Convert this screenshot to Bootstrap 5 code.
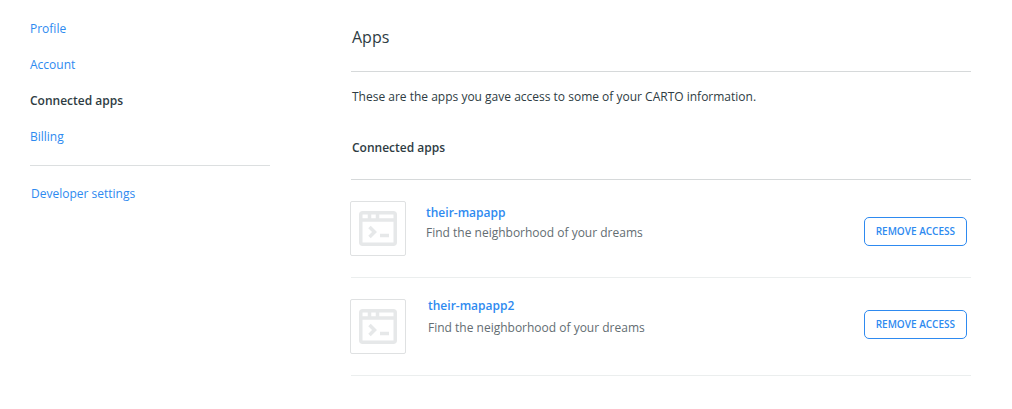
<!DOCTYPE html>
<html lang="en">
<head>
<meta charset="utf-8">
<meta name="viewport" content="width=device-width, initial-scale=1">
<title>Connected apps</title>
<link href="https://cdn.jsdelivr.net/npm/bootstrap@5.3.0/dist/css/bootstrap.min.css" rel="stylesheet">
<style>
  body { font: 400 12px/20px "Open Sans", sans-serif; color: #2e3c43; background: #fff; }
  a { color: #2e8af0; text-decoration: none; }
  a:hover { text-decoration: underline; }
  .page { padding: 19px 41px 0 30px; gap: 81px; }
  .sidebar { flex: 0 0 240px; }
  .side-links { gap: 16px; padding-bottom: 18px; border-bottom: 1px solid #dcdfe0; }
  .side-extra { padding: 18px 1px; }
  .page-title { font-size: 16px; line-height: 24px; padding: 6px 1px 22px; border-bottom: 1px solid #d6d9da; }
  .intro { padding: 15px 1px 31px; }
  .section-title { font-size: 12px; line-height: 20px; padding: 0 1px 21px; border-bottom: 1px solid #d6d9da; }
  .app-item { gap: 20px; min-height: 98px; border-bottom: 1px solid #ebeeee; }
  .app-icon { width: 56px; height: 55px; margin-top: 21px; margin-left: -1px; border: 1px solid #dfe1e2; border-radius: 2px; }
  .app-text { padding-top: 23px; color: #636d72; }
  .app-action { padding: 37px 4px 0 0; }
  .app-compact { gap: 22px; }
  .app-compact .app-text { padding-top: 18px; row-gap: 2px; }
  .app-compact .app-action { padding-top: 32px; }
  .btn-access { --bs-btn-color: #2e8af0; --bs-btn-border-color: #2e8af0; --bs-btn-hover-bg: #2e8af0; --bs-btn-hover-color: #fff;
    --bs-btn-padding-x: 11px; --bs-btn-padding-y: 5px; --bs-btn-border-radius: 5px;
    --bs-btn-font-size: 10px; --bs-btn-line-height: 17px; --bs-btn-font-weight: 600; }
</style>
</head>
<body>
<div class="page d-flex align-items-start">
  <nav class="sidebar" aria-label="Settings">
    <ul class="side-links list-unstyled d-flex flex-column mb-0">
      <li><a href="#profile">Profile</a></li>
      <li><a href="#account">Account</a></li>
      <li class="fw-semibold" aria-current="page">Connected apps</li>
      <li><a href="#billing">Billing</a></li>
    </ul>
    <div class="side-extra"><a href="#developer">Developer settings</a></div>
  </nav>
  <main class="flex-grow-1">
    <h1 class="page-title fw-normal mb-0">Apps</h1>
    <p class="intro mb-0">These are the apps you gave access to some of your CARTO information.</p>
    <h2 class="section-title fw-semibold mb-0">Connected apps</h2>
    <ul class="list-unstyled mb-0">
      <li class="app-item d-flex align-items-start">
        <div class="app-icon d-flex align-items-center justify-content-center flex-shrink-0">
          <svg width="38" height="35" viewBox="0 0 38 35" fill="none" stroke="#e6e8e9" stroke-width="3.5" aria-hidden="true">
            <rect x="1.75" y="1.75" width="34.5" height="31.500" rx="2"/><path d="M2 9H36M10.500 2V8M18.500 2V8"/><path d="M10.500 16L15.500 21L10.500 26M21 24.500H30"/>
          </svg>
        </div>
        <div class="app-text d-flex flex-column flex-grow-1">
          <a class="fw-semibold" href="#their-mapapp">their-mapapp</a>
          <span>Find the neighborhood of your dreams</span>
        </div>
        <div class="app-action"><button type="button" class="btn btn-access text-nowrap d-block">REMOVE ACCESS</button></div>
      </li>
      <li class="app-item app-compact d-flex align-items-start">
        <div class="app-icon d-flex align-items-center justify-content-center flex-shrink-0">
          <svg width="38" height="35" viewBox="0 0 38 35" fill="none" stroke="#e6e8e9" stroke-width="3.5" aria-hidden="true">
            <rect x="1.75" y="1.75" width="34.5" height="31.500" rx="2"/><path d="M2 9H36M10.500 2V8M18.500 2V8"/><path d="M10.500 16L15.500 21L10.500 26M21 24.500H30"/>
          </svg>
        </div>
        <div class="app-text d-flex flex-column flex-grow-1">
          <a class="fw-semibold" href="#their-mapapp2">their-mapapp2</a>
          <span>Find the neighborhood of your dreams</span>
        </div>
        <div class="app-action"><button type="button" class="btn btn-access text-nowrap d-block">REMOVE ACCESS</button></div>
      </li>
    </ul>
  </main>
</div>
<script src="https://cdn.jsdelivr.net/npm/bootstrap@5.3.0/dist/js/bootstrap.bundle.min.js"></script>
</body>
</html>
